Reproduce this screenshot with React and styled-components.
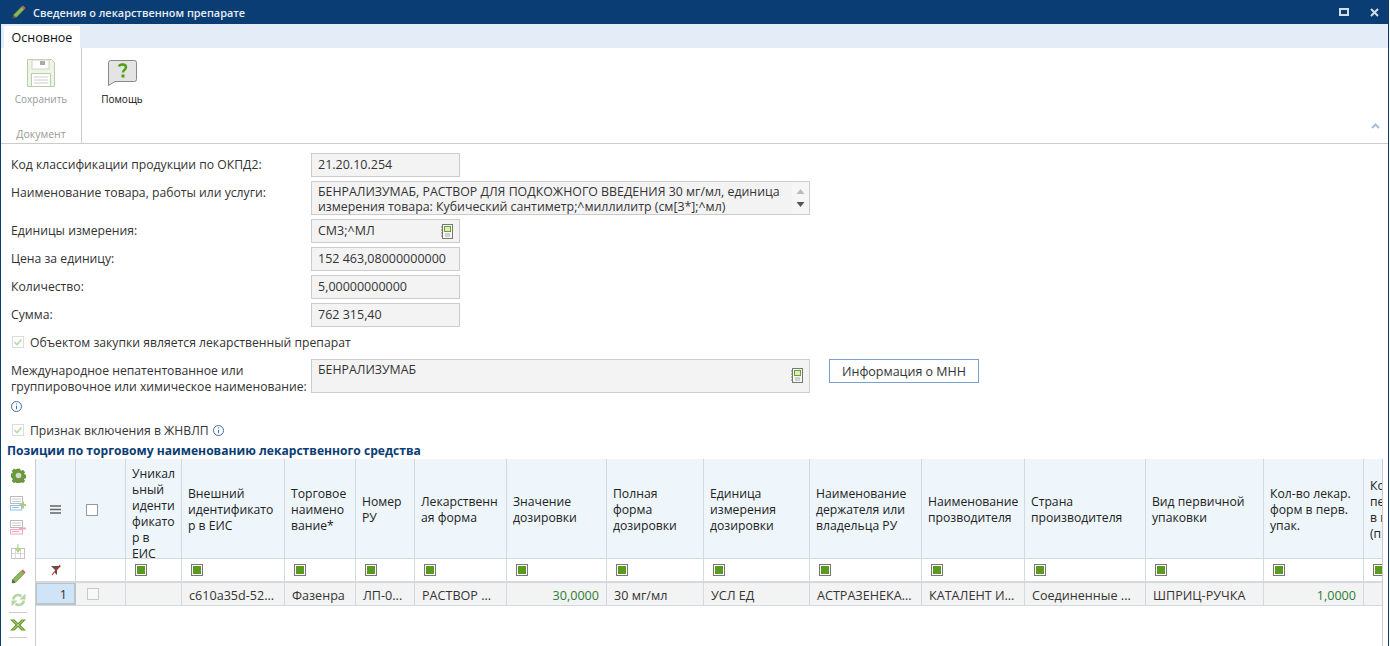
import React from 'react';
import styled, { createGlobalStyle } from 'styled-components';

const GlobalStyle = createGlobalStyle`
    html, body {
        margin: 0;
        padding: 0;
        background: #fff;
        overflow: hidden;
    }
    * {
        box-sizing: border-box;
    }
`;

const Window = styled.div`
    width: 1390px;
    height: 646px;
    display: flex;
    flex-direction: column;
    overflow: hidden;
    background: #fff;
    border-left: 1px solid #0a3d73;
    border-right: 1px solid #fff;
    box-shadow: inset -1px 0 0 #0a3d73;
    font-family: "Open Sans", "Noto Sans", sans-serif;
    font-size: 12.2px;
    color: #333;
`;

const TitleBar = styled.div`
    flex: 0 0 24px;
    background: #0a3d73;
    display: flex;
    align-items: center;
    padding: 0 10px 0 11px;
    color: #e8eef5;
    font-size: 10.9px;
    font-weight: 600;
    gap: 7px;
`;

const TitleText = styled.div`
    flex: 1;
`;

const WinButtons = styled.div`
    display: flex;
    align-items: center;
    gap: 21px;
`;

const TabStrip = styled.div`
    flex: 0 0 24px;
    margin-right: 1px;
    background: #e4edf7;
    padding: 2px 0 0 3px;
    display: flex;
`;

const Tab = styled.div`
    width: 76px;
    background: #fff;
    color: #111;
    font-size: 12.5px;
    display: flex;
    align-items: center;
    justify-content: center;
`;

const Ribbon = styled.div`
    flex: 0 0 96px;
    display: flex;
    border-bottom: 1px solid #ccc;
    margin-right: 1px;
    position: relative;
`;

const RibbonGroup = styled.div`
    width: 81px;
    border-right: 1px solid #ccc;
    display: flex;
    flex-direction: column;
    align-items: center;
    padding-top: 11px;
`;

const RibbonButton = styled.div`
    display: flex;
    flex-direction: column;
    align-items: center;
    gap: ${(p) => (p.$help ? 6 : 5)}px;
    font-size: 10px;
    line-height: 14px;
    color: ${(p) => (p.$disabled ? '#999' : '#111')};
    ${(p) => p.$help && 'margin-left: 18px; width: 44px; padding-top: 12px;'}
`;

const GroupName = styled.div`
    margin-top: 21px;
    font-size: 10.5px;
    line-height: 14px;
    color: #999;
`;

const Collapse = styled.svg`
    position: absolute;
    right: 8px;
    top: 75px;
`;

const Form = styled.div`
    padding: 9px 0 0 10px;
    display: flex;
    flex-direction: column;
    gap: 4px;
`;

const Row = styled.div`
    display: flex;
    align-items: flex-start;
`;

const Label = styled.div`
    width: 300px;
    line-height: 16px;
    padding-top: 4px;
`;

const Field = styled.div`
    position: relative;
    width: ${(p) => p.$width || 149}px;
    height: ${(p) => p.$height || 24}px;
    background: #f3f3f3;
    border: 1px solid #ccc;
    padding: ${(p) => (p.$multi ? '2px 6px' : '3px 6px')};
    line-height: ${(p) => (p.$multi ? 15 : 16)}px;
    font-size: ${(p) => (p.$multi ? 12.35 : 12.5)}px;
    color: #333;
    overflow: hidden;
`;

const FieldIcon = styled.svg`
    position: absolute;
    right: 5px;
    top: ${(p) => p.$top}px;
`;

const Scroller = styled.div`
    position: absolute;
    top: 0;
    right: 0;
    width: 17px;
    height: 100%;
    background: #f6f6f6;
    display: flex;
    flex-direction: column;
    align-items: center;
    justify-content: space-between;
    padding: 7px 0;
`;

const CheckRow = styled.div`
    display: flex;
    align-items: center;
    gap: 4px;
    margin: ${(p) => p.$margin};
    padding-left: 1px;
    height: 16px;
`;

const CheckBox = styled.div`
    width: 12px;
    height: 12px;
    margin-right: 2px;
    border: 1px solid #dcdcdc;
    display: flex;
    align-items: center;
    justify-content: center;
    background: #fff;
`;

const InfoLine = styled.div`
    height: 16px;
    margin-top: 3px;
    display: flex;
    align-items: center;
`;

const MnnLabel = styled.div`
    width: 300px;
    height: 51px;
    line-height: 16px;
    padding-top: 4px;
    white-space: nowrap;
`;

const MnnButton = styled.div`
    margin-left: 19px;
    width: 150px;
    height: 24px;
    border: 1px solid #7ba0cc;
    display: flex;
    align-items: center;
    justify-content: center;
    padding-top: 1px;
    font-size: 12.5px;
    color: #333;
    background: #fff;
`;

const SectionTitle = styled.div`
    margin-top: 5px;
    padding-left: 6px;
    height: 16px;
    line-height: 15px;
    font-weight: 700;
    font-size: 12.1px;
    color: #0a3d73;
`;

const GridArea = styled.div`
    display: flex;
    flex: 1;
    min-height: 0;
`;

const Tools = styled.div`
    flex: 0 0 35px;
    border-right: 1px solid #ccc;
    display: flex;
    flex-direction: column;
    align-items: center;
    padding-top: 4px;
`;

const ToolSlot = styled.div`
    width: 24px;
    height: 24px;
    margin-top: ${(p) => p.$top || 0}px;
    display: flex;
    align-items: center;
    justify-content: center;
`;

const ToolSep = styled.div`
    flex: 0 0 1px;
    width: 18px;
    background: #ccc;
`;

const Table = styled.div`
    flex: 0 0 1347px;
    overflow: hidden;
    border-right: 1px solid #ccc;
`;

const TableRow = styled.div`
    display: grid;
    grid-template-columns: ${(p) => p.$cols};
    height: ${(p) => p.$height}px;
    width: 1448px;
    background: ${(p) => p.$bg};
    border-bottom: ${(p) => p.$bottom || '1px solid #d4d9de'};
`;

const HeadCell = styled.div`
    border-right: 1px solid #d4d9de;
    padding: ${(p) => p.$top || 2}px ${(p) => (p.$center ? 6 : 3)}px 0 6px;
    display: flex;
    align-items: center;
    justify-content: ${(p) => (p.$center ? 'center' : 'flex-start')};
    line-height: 16px;
    color: #222;
    font-size: 12.2px;
    white-space: pre-line;
    word-break: break-word;
    overflow: hidden;
`;

const FilterCell = styled.div`
    border-right: 1px solid #d4d9de;
    padding-left: ${(p) => (p.$center ? 0 : 9)}px;
    display: flex;
    align-items: center;
    justify-content: ${(p) => (p.$center ? 'center' : 'flex-start')};
`;

const FilterBox = styled.div`
    width: 12px;
    height: 12px;
    border: 1px solid #777;
    display: flex;
    align-items: center;
    justify-content: center;
    background: #fff;
    &::after {
        content: '';
        width: 8px;
        height: 8px;
        background: #5a9a1e;
    }
`;

const DataCell = styled.div`
    border-right: 1px solid #d4d9de;
    padding: 3px 7px 0;
    display: flex;
    align-items: center;
    justify-content: ${(p) => (p.$right ? 'flex-end' : 'flex-start')};
    color: ${(p) => (p.$green ? '#2e7d32' : '#333')};
    font-size: 12.6px;
    white-space: nowrap;
    overflow: hidden;
`;

const RowNumber = styled(DataCell)`
    background: #cfe4f7;
    border: 1px solid #b9c4cf;
    border-width: 1px 2px 2px 1px;
    justify-content: flex-end;
    padding: 1px 7px 0 0;
`;

const RowCheck = styled.div`
    width: 12px;
    height: 12px;
    margin: -3px 0 0 4px;
    border: 1px solid #c8c8c8;
    background: #f8f8f8;
`;

const HeadCheck = styled.div`
    width: 12px;
    height: 12px;
    border: 1px solid #999;
    background: #fff;
`;

const HeadCheckCell = styled(HeadCell)`
    padding-left: 10px;
`;

const columns = [40, 50, 56, 103, 71, 59, 92, 100, 97, 106, 112, 103, 121, 118, 100, 120];
const template = columns.map((w) => `${w}px`).join(' ');

const headers = [
    { text: 'Уникал\nьный\nиденти\nфикато\nр в\nЕИС', top: 10 },
    { text: 'Внешний идентификато р в ЕИС' },
    { text: 'Торговое наимено вание*' },
    { text: 'Номер\nРУ' },
    { text: 'Лекарственн ая форма' },
    { text: 'Значение\nдозировки' },
    { text: 'Полная\nформа\nдозировки' },
    { text: 'Единица\nизмерения\nдозировки' },
    { text: 'Наименование\nдержателя или\nвладельца РУ' },
    { text: 'Наименование\nпрозводителя' },
    { text: 'Страна\nпроизводителя' },
    { text: 'Вид первичной\nупаковки' },
    { text: 'Кол-во лекар.\nформ в перв.\nупак.' },
    { text: 'Кол-во лекар.\nперв. упак.\nв потр. упак.\n(пр.)' },
];

const cells = [
    { text: '' },
    { text: 'c610a35d-52...' },
    { text: 'Фазенра' },
    { text: 'ЛП-0...' },
    { text: 'РАСТВОР ...' },
    { text: '30,0000', right: true, green: true },
    { text: '30 мг/мл' },
    { text: 'УСЛ ЕД' },
    { text: 'АСТРАЗЕНЕКА...' },
    { text: 'КАТАЛЕНТ И...' },
    { text: 'Соединенные ...' },
    { text: 'ШПРИЦ-РУЧКА' },
    { text: '1,0000', right: true, green: true },
    { text: '' },
];

const BookIcon = ({ top }) => (
    <FieldIcon $top={top} width="14" height="15" viewBox="0 0 14 15">
        <rect x="2.5" y="0.5" width="10" height="14" fill="#f7f7f2" stroke="#777" />
        <rect x="4.5" y="2.5" width="6" height="5" fill="#dcebc6" stroke="#6aa32a" />
        <path d="M5 10h5M5 12h5" stroke="#aaa" />
        <path d="M1 3h2M1 6h2M1 9h2M1 12h2" stroke="#777" />
    </FieldIcon>
);

const InfoIcon = () => (
    <svg width="11" height="11" viewBox="0 0 11 11">
        <circle cx="5.5" cy="5.5" r="5" fill="none" stroke="#3f6ea8" />
        <path d="M5.5 2.5v1M5.5 4.8v3.4" stroke="#3f6ea8" />
    </svg>
);

const Tick = () => (
    <svg width="10" height="10" viewBox="0 0 10 10">
        <path d="M1.5 5l2.5 2.500 4.500-5" fill="none" stroke="#b9d7a8" strokeWidth="1.6" />
    </svg>
);

const PencilIcon = ({ size = 14 }) => (
    <svg width={size} height={size} viewBox="0 0 14 14">
        <path d="M1 13l0.600-3.200L9.800 1.600l2.600 2.600-8.200 8.200z" fill="#8cba55" stroke="#55703a" strokeWidth="0.6" />
        <path d="M9.800 1.600l1.200-1.100 2.600 2.600-1.200 1.100z" fill="#e0566a" />
        <path d="M1 13l0.600-3.200 2.600 2.600z" fill="#555" />
    </svg>
);

const RowIcon = ({ main, accent, plus }) => (
    <svg width="16" height="15" viewBox="0 0 16 15">
        <rect x="0.5" y="0.5" width="12" height="7" fill="#fff" stroke="#bbb" />
        <path d="M2 3h9M2 5.500h9" stroke="#ccc" />
        <rect x="0.5" y="9.500" width={plus ? 11 : 12} height="4.500" fill="#fff" stroke={main} />
        <path d="M2 11.500h7" stroke={main} />
        {plus ? (
            <path d="M13 5.500v7M9.500 9h7" stroke={accent} strokeWidth="2" />
        ) : (
            <path d="M9 8.500h7" stroke={accent} strokeWidth="2" />
        )}
    </svg>
);

const App = () => {
    return (
        <Window>
            <GlobalStyle />
            <TitleBar>
                <PencilIcon />
                <TitleText>Сведения о лекарственном препарате</TitleText>
                <WinButtons>
                    <svg width="10" height="8" viewBox="0 0 10 8">
                        <rect x="1" y="1" width="8" height="6" fill="none" stroke="#d5dde8" strokeWidth="2" />
                    </svg>
                    <svg width="9" height="9" viewBox="0 0 9 9">
                        <path d="M1 1l7 7M8 1l-7 7" stroke="#d5dde8" strokeWidth="2" />
                    </svg>
                </WinButtons>
            </TitleBar>
            <TabStrip>
                <Tab>Основное</Tab>
            </TabStrip>
            <Ribbon>
                <RibbonGroup>
                    <RibbonButton $disabled>
                        <svg width="28" height="28" viewBox="0 0 28 28">
                            <path d="M0.500 0.500h24l3 3v24h-27z" fill="#eef4e8" stroke="#b8cfa8" />
                            <rect x="5" y="1" width="17" height="9" fill="#fff" stroke="#c9d8bd" />
                            <rect x="13" y="2" width="5" height="4" fill="#aaa" />
                            <rect x="4.500" y="14.500" width="19" height="13" fill="#fff" stroke="#b8cfa8" />
                            <path d="M7 18h14M7 21h14M7 24h14" stroke="#ccc" />
                        </svg>
                        Сохранить
                    </RibbonButton>
                    <GroupName>Документ</GroupName>
                </RibbonGroup>
                <RibbonButton $help>
                    <svg width="29" height="26" viewBox="0 0 29 26">
                        <path d="M2.500 0.500h24a2 2 0 0 1 2 2v17a2 2 0 0 1-2 2H7l-6.500 4V2.500a2 2 0 0 1 2-2z" fill="#e4e4e4" stroke="#888" />
                        <path d="M11 6.500c0.500-2.500 7-3 7 0.800 0 2.700-3 2.500-3 5.200" fill="none" stroke="#4fa016" strokeWidth="2.4" />
                        <rect x="13.500" y="14.500" width="3" height="3" fill="#4fa016" />
                    </svg>
                    Помощь
                </RibbonButton>
                <Collapse width="9" height="6" viewBox="0 0 9 6">
                    <path d="M1 5l3.500-3.500L8 5" fill="none" stroke="#a9bcd4" strokeWidth="2" />
                </Collapse>
            </Ribbon>
            <Form>
                <Row>
                    <Label>Код классификации продукции по ОКПД2:</Label>
                    <Field>21.20.10.254</Field>
                </Row>
                <Row>
                    <Label>Наименование товара, работы или услуги:</Label>
                    <Field $width={499} $height={34} $multi>
                        БЕНРАЛИЗУМАБ, РАСТВОР ДЛЯ ПОДКОЖНОГО ВВЕДЕНИЯ 30 мг/мл, единица
                        <br />
                        измерения товара: Кубический сантиметр;^миллилитр (см[3*];^мл)
                        <Scroller>
                            <svg width="9" height="5" viewBox="0 0 9 5">
                                <path d="M0.500 5L4.500 0l4 5z" fill="#bbb" />
                            </svg>
                            <svg width="9" height="5" viewBox="0 0 9 5">
                                <path d="M0.500 0h8l-4 5z" fill="#555" />
                            </svg>
                        </Scroller>
                    </Field>
                </Row>
                <Row>
                    <Label>Единицы измерения:</Label>
                    <Field>
                        СМ3;^МЛ
                        <BookIcon top={4} />
                    </Field>
                </Row>
                <Row>
                    <Label>Цена за единицу:</Label>
                    <Field>152 463,08000000000</Field>
                </Row>
                <Row>
                    <Label>Количество:</Label>
                    <Field>5,00000000000</Field>
                </Row>
                <Row>
                    <Label>Сумма:</Label>
                    <Field>762 315,40</Field>
                </Row>
                <CheckRow $margin="3px 0 5px">
                    <CheckBox>
                        <Tick />
                    </CheckBox>
                    Объектом закупки является лекарственный препарат
                </CheckRow>
                <Row>
                    <MnnLabel>
                        Международное непатентованное или
                        <br />
                        группировочное или химическое наименование:
                        <InfoLine>
                            <InfoIcon />
                        </InfoLine>
                    </MnnLabel>
                    <Field $width={499} $height={34} $multi>
                        БЕНРАЛИЗУМАБ
                        <BookIcon top={8} />
                    </Field>
                    <MnnButton>Информация о МНН</MnnButton>
                </Row>
                <CheckRow $margin="8px 0 0">
                    <CheckBox>
                        <Tick />
                    </CheckBox>
                    <span>Признак включения в ЖНВЛП</span>
                    <InfoIcon />
                </CheckRow>
            </Form>
            <SectionTitle>Позиции по торговому наименованию лекарственного средства</SectionTitle>
            <GridArea>
                <Tools>
                    <ToolSlot>
                        <svg width="15" height="15" viewBox="0 0 15 15">
                            <path d="M6 0.500h3l0.400 1.800 1.500 0.600 1.600-1 2 2-1 1.600 0.600 1.500 1.800 0.400v3l-1.800 0.400-0.600 1.500 1 1.600-2 2-1.600-1-1.500 0.600-0.400 1.800H6l-0.400-1.800-1.500-0.600-1.600 1-2-2 1-1.600-0.600-1.500L-0.900 9V6l1.800-0.400 0.600-1.500-1-1.600 2-2 1.600 1 1.500-0.600z" transform="translate(0.700 0.500) scale(0.9)" fill="#6b9a3c" stroke="#4d7a22" strokeWidth="0.6" />
                            <circle cx="7.500" cy="7.500" r="2.800" fill="#d9d9d0" />
                        </svg>
                    </ToolSlot>
                    <ToolSlot $top={4}>
                        <RowIcon main="#8fc0e8" accent="#a5cf86" plus />
                    </ToolSlot>
                    <ToolSlot>
                        <RowIcon main="#f2a8b4" accent="#f2a8b4" />
                    </ToolSlot>
                    <ToolSlot>
                        <svg width="14" height="15" viewBox="0 0 14 15">
                            <rect x="0.500" y="4.500" width="13" height="10" fill="#fff" stroke="#c4c4c4" />
                            <path d="M4.500 5v9M9.500 5v9M1 9.500h12" stroke="#d8d8d8" />
                            <path d="M7 0v5M4.500 4.500L7 8l2.500-3.500z" fill="#b0d394" stroke="#b0d394" strokeWidth="1.2" />
                        </svg>
                    </ToolSlot>
                    <ToolSlot $top={1}>
                        <PencilIcon size={15} />
                    </ToolSlot>
                    <ToolSlot>
                        <svg width="15" height="14" viewBox="0 0 15 14">
                            <path d="M2.200 6.500A5 5 0 0 1 10.500 3.300" fill="none" stroke="#b5d6a0" strokeWidth="2.6" />
                            <path d="M8.500 6.500h6v-6z" fill="#b5d6a0" />
                            <path d="M12.800 7.500A5 5 0 0 1 4.500 10.700" fill="none" stroke="#b5d6a0" strokeWidth="2.6" />
                            <path d="M6.500 7.500h-6v6z" fill="#b5d6a0" />
                        </svg>
                    </ToolSlot>
                    <ToolSep />
                    <ToolSlot>
                        <svg width="16" height="12" viewBox="0 0 16 12">
                            <path d="M0 0.500h4.500L8 4l3.500-3.500H16L10.500 6 16 11.500h-4.500L8 8l-3.500 3.500H0L5.500 6z" fill="#6b9a2c" />
                            <path d="M3 1.500l10 9M13 1.500l-10 9" stroke="#c6dfa8" strokeWidth="0.8" />
                        </svg>
                    </ToolSlot>
                    <ToolSep />
                </Tools>
                <Table>
                    <TableRow $cols={template} $height={100} $bg="#eef6fb">
                        <HeadCell $center>
                            <svg width="11" height="9" viewBox="0 0 11 9">
                                <path d="M0 1h11M0 4.500h11M0 8h11" stroke="#666" strokeWidth="1.6" />
                            </svg>
                        </HeadCell>
                        <HeadCheckCell>
                            <HeadCheck />
                        </HeadCheckCell>
                        {headers.map((h) => (
                            <HeadCell key={h.text} $top={h.top}>
                                {h.text}
                            </HeadCell>
                        ))}
                    </TableRow>
                    <TableRow $cols={template} $height={24} $bg="#fff" $bottom="2px solid #d4d9de">
                        <FilterCell $center>
                            <svg width="12" height="12" viewBox="0 0 12 12">
                                <path d="M1 2h10L7 6v5L5 9V6z" fill="#555" />
                                <path d="M10 1L2 11" stroke="#e02020" strokeWidth="1.2" />
                            </svg>
                        </FilterCell>
                        <FilterCell />
                        {headers.map((h) => (
                            <FilterCell key={h.text}>
                                <FilterBox />
                            </FilterCell>
                        ))}
                    </TableRow>
                    <TableRow $cols={template} $height={23} $bg="#f3f3f3">
                        <RowNumber>1</RowNumber>
                        <DataCell>
                            <RowCheck />
                        </DataCell>
                        {cells.map((c, i) => (
                            <DataCell key={i} $right={c.right} $green={c.green}>
                                {c.text}
                            </DataCell>
                        ))}
                    </TableRow>
                </Table>
            </GridArea>
        </Window>
    );
};

export default App;
